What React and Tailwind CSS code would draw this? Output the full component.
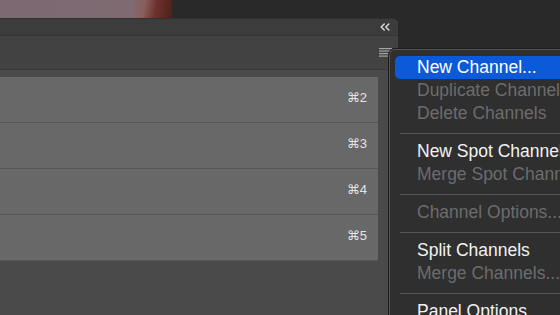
import React from 'react';

const rows = ['⌘2', '⌘3', '⌘4', '⌘5'];

const menu = [
  { label: 'New Channel...', active: true },
  { label: 'Duplicate Channel...', disabled: true },
  { label: 'Delete Channels', disabled: true },
  { sep: true },
  { label: 'New Spot Channel...' },
  { label: 'Merge Spot Channels', disabled: true },
  { sep: true },
  { label: 'Channel Options...', disabled: true },
  { sep: true },
  { label: 'Split Channels' },
  { label: 'Merge Channels...', disabled: true },
  { sep: true },
  { label: 'Panel Options...' },
];

const Chevrons = () => (
  <svg width="10" height="8" viewBox="0 0 10 8" fill="none" stroke="#d4d4d4" strokeWidth="1.6" strokeLinecap="round" strokeLinejoin="round">
    <path d="M4.2 1 L1.2 4 L4.2 7" />
    <path d="M8.8 1 L5.8 4 L8.8 7" />
  </svg>
);

const PanelMenuIcon = () => (
  <svg width="13" height="10" viewBox="0 0 13 10" fill="#a3a3a3">
    <rect x="0" y="0" width="13" height="1.2" />
    <rect x="0" y="2.5" width="13" height="1.2" />
    <rect x="0" y="5" width="13" height="1.2" />
    <rect x="0" y="7.5" width="13" height="1.2" />
  </svg>
);

export default function App() {
  return (
    <div className="relative w-[560px] h-[315px] overflow-hidden bg-[#292929] font-['Liberation_Sans','DejaVu_Sans',sans-serif]">
      {/* picture strip above the panel */}
      <div className="h-[18px] flex">
        <div className="w-[172px] bg-[linear-gradient(100deg,#7c6971_0%,#806b73_76%,#8a5d5c_83%,#6b322c_90%,#4f1f1a_100%)]" />
      </div>

      {/* channels panel */}
      <div className="w-[398px] h-[297px] flex flex-col rounded-tr-[6px] overflow-hidden bg-[#4a4a4a] border-t border-[#2f2f2f]">
        <div className="h-[16px] flex items-center justify-end pr-[8px] bg-[#3c3c3c]">
          <Chevrons />
        </div>
        <div className="h-px bg-[#353535]" />
        <div className="h-[33px] flex justify-end items-start pt-[12px] pr-[6px] bg-[#424242]">
          <PanelMenuIcon />
        </div>
        <div className="h-px bg-[#383838]" />
        <div className="h-[7px]" />
        <div className="w-[378px] flex flex-col">
          {rows.map((k) => (
            <div key={k} className="h-[46px] flex items-center justify-end pr-[11px] pb-[4px] bg-[#686868] border-b border-[#555555]">
              <span className="text-[13px] text-[#e4e4e4]">{k}</span>
            </div>
          ))}
        </div>
      </div>

      {/* flyout menu */}
      <div className="absolute left-[388px] top-[48px] w-[230px] h-[290px] rounded-tl-[7px] border border-[#1c1c1c] bg-[#2f2f2f] shadow-[inset_0_0_0_1px_#555555]">
        <div className="pt-[7px] pl-[6px] flex flex-col">
          {menu.map((m, i) =>
            m.sep ? (
              <div key={i} className="h-[15px] pt-[8px] pl-[5px]">
                <div className="h-px bg-[#555555]" />
              </div>
            ) : (
              <div
                key={i}
                className={`h-[23px] leading-[23px] pl-[22px] text-[17.5px] whitespace-nowrap rounded-l-[5px] ${
                  m.active ? 'bg-[#0b5ad9] text-white' : m.disabled ? 'text-[#6c6c6c]' : 'text-[#f2f2f2]'
                }`}
              >
                {m.label}
              </div>
            )
          )}
        </div>
      </div>
    </div>
  );
}
